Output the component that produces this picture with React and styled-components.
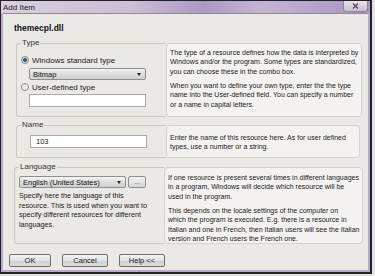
import React from 'react'
import styled, { createGlobalStyle } from 'styled-components'

const Global = createGlobalStyle`
  html, body { margin: 0; padding: 0; background: #e4e4e4; }
  body { font-family: "Liberation Sans", Arial, sans-serif; }
`

const Window = styled.div`
  width: 372px;
  height: 274px;
  box-sizing: border-box;
  border: 1px solid #222;
  border-right-width: 2px;
  border-bottom-width: 2px;
  background: #b8aac8;
  display: flex;
  flex-direction: column;
  overflow: hidden;
`

const TitleBar = styled.div`
  height: 12px;
  flex: none;
  display: flex;
  align-items: center;
  justify-content: space-between;
  padding-left: 2px;
  background: linear-gradient(90deg, #d6d0dc 0%, #c9bfd6 35%, #ab98c6 55%, #c2b5d4 70%, #a993c8 100%);
  font-size: 8px;
  color: #1e1a24;
`

const CloseBtn = styled.div`
  width: 23px;
  height: 10px;
  margin-right: 2px;
  align-self: flex-start;
  border: 1px solid #8d8597;
  border-top: none;
  border-radius: 0 0 3px 3px;
  background: linear-gradient(#e6e2ea, #c8c0d2);
  display: flex;
  align-items: center;
  justify-content: center;
`

const Body = styled.div`
  flex: 1;
  margin: 0 2px 2px 2px;
  background: #ebe9e6;
  border-top: 1px solid #8e8a92;
  padding: 9px 8px 0 7px;
  display: flex;
  flex-direction: column;
`

const FileName = styled.div`
  font-weight: bold;
  font-size: 8.5px;
  color: #111;
  margin-left: 4px;
  height: 10px;
  line-height: 10px;
`

const Group = styled.div`
  display: grid;
  grid-template-columns: ${p => p.$left}px 1fr;
  min-height: ${p => p.$h}px;
  margin-top: ${p => p.$mt}px;
  margin-left: ${p => p.$ml || 6}px;
`

const Frame = styled.div`
  position: relative;
  border: 1px solid #cbc8c3;
  border-right: none;
  border-radius: 3px 0 0 3px;
  padding: ${p => p.$pad};
  display: flex;
  flex-direction: column;
`

const Legend = styled.span`
  position: absolute;
  top: -6px;
  left: 4px;
  padding: 0 1px;
  background: #ebe9e6;
  font-size: 8px;
  color: #333;
  line-height: 10px;
`

const Info = styled.div`
  background: #f3f2f0;
  border: 1px solid #d5d2cd;
  border-radius: 4px;
  padding: ${p => p.$pad || '3px 3px'};
  font-size: 7px;
  line-height: 9.4px;
  color: #1a1a1a;
  p { margin: 0 0 4.5px 0; white-space: nowrap; }
  p:last-child { margin-bottom: 0; }
`

const RadioRow = styled.label`
  display: flex;
  align-items: center;
  gap: 3px;
  font-size: 8px;
  color: #222;
  height: 10px;
  margin-left: 4px;
  margin-top: ${p => p.$mt || 0}px;
`

const Radio = styled.span`
  width: 8px;
  height: 8px;
  box-sizing: border-box;
  border-radius: 50%;
  border: 1px solid #8d8d8d;
  background: radial-gradient(circle, ${p => (p.$on ? '#445a6e 0 1.8px, #c9d1d8 2.2px' : '#e9e9e9 0')}, #f6f6f6 100%);
`

const Select = styled.div`
  width: ${p => p.$w}px;
  height: 12px;
  box-sizing: border-box;
  margin-left: ${p => p.$ml || 0}px;
  margin-top: ${p => p.$mt || 0}px;
  border: 1px solid #8f8f8f;
  border-radius: 2px;
  background: linear-gradient(#f4f4f4, #dcdcdc 55%, #cfcfcf);
  display: flex;
  align-items: center;
  justify-content: space-between;
  padding: 0 4px 0 3px;
  font-size: 7.5px;
  color: #111;
  &::after {
    content: '';
    border-left: 2.5px solid transparent;
    border-right: 2.5px solid transparent;
    border-top: 3px solid #222;
  }
`

const TextBox = styled.div`
  width: ${p => p.$w}px;
  height: 13px;
  box-sizing: border-box;
  margin-left: ${p => p.$ml || 0}px;
  margin-top: ${p => p.$mt || 0}px;
  border: 1px solid #a9a9a9;
  background: #fff;
  font-size: 7.5px;
  color: #222;
  padding: 0 5px;
  line-height: 11px;
`

const LangRow = styled.div`
  display: flex;
  gap: 2px;
  align-items: center;
`

const SmallBtn = styled.div`
  width: 18px;
  height: 12px;
  box-sizing: border-box;
  border: 1px solid #909090;
  border-radius: 2px;
  background: linear-gradient(#f2f2f2, #d6d6d6);
  font-size: 7px;
  color: #666;
  text-align: center;
  line-height: 9px;
`

const Help = styled.div`
  font-size: 7.2px;
  line-height: 9.5px;
  color: #1a1a1a;
  margin-top: 3px;
`

const Buttons = styled.div`
  display: flex;
  gap: 11px;
  margin-top: 10px;
  margin-left: -1px;
`

const Button = styled.div`
  width: ${p => p.$w}px;
  height: 13px;
  box-sizing: border-box;
  border: 1px solid #6f6f6f;
  border-radius: 2px;
  background: linear-gradient(#f3f3f3, #e2e2e2 50%, #cfcfcf 51%, #dcdcdc);
  font-size: 7.5px;
  color: #222;
  display: flex;
  align-items: center;
  justify-content: center;
`

export default function App() {
  return (
    <>
      <Global />
      <Window>
        <TitleBar>
          <span>Add Item</span>
          <CloseBtn>
            <svg width="7" height="6" viewBox="0 0 7 6">
              <path d="M1 0.5 L6 5.5 M6 0.5 L1 5.5" stroke="#4b4553" strokeWidth="1.2" />
            </svg>
          </CloseBtn>
        </TitleBar>
        <Body>
          <FileName>themecpl.dll</FileName>

          <Group $left={150} $h={74} $mt={10}>
            <Frame $pad="11px 0 0 0">
              <Legend>Type</Legend>
              <RadioRow>
                <Radio $on />
                Windows standard type
              </RadioRow>
              <Select $w={117} $ml={12} $mt={3}>Bitmap</Select>
              <RadioRow $mt={2}>
                <Radio />
                User-defined type
              </RadioRow>
              <TextBox $w={117} $ml={12} $mt={2} />
            </Frame>
            <Info $pad="4px 3px">
              <p>The type of a resource defines how the data is interpreted by<br />Windows and/or the program. Some types are standardized,<br />you can choose these in the combo box.</p>
              <p>When you want to define your own type, enter the the type<br />name into the User-defined field. You can specify a number<br />or a name in capital letters.</p>
            </Info>
          </Group>

          <Group $left={150} $h={33} $mt={8}>
            <Frame $pad="9px 0 0 0">
              <Legend>Name</Legend>
              <TextBox $w={117} $ml={13}>103</TextBox>
            </Frame>
            <Info $pad="7px 3px 0">
              <p>Enter the name of this resource here. As for user defined<br />types, use a number or a string.</p>
            </Info>
          </Group>

          <Group $left={150} $h={75} $mt={9} $ml={4}>
            <Frame $pad="8px 0 0 4px">
              <Legend>Language</Legend>
              <LangRow>
                <Select $w={107}>English (United States)</Select>
                <SmallBtn>...</SmallBtn>
              </LangRow>
              <Help>
                Specify here the language of this<br />
                resource. This is used when you want to<br />
                specify different resources for different<br />
                languages.
              </Help>
            </Frame>
            <Info $pad="5px 3px 0">
              <p>If one resource is present several times in different languages<br />in a program, Windows will decide which resource will be<br />used in the program.</p>
              <p>This depends on the locale settings of the computer on<br />which the program is executed. E.g. there is a resource in<br />Italian and one in French, then Italian users will see the Italian<br />version and French users the French one.</p>
            </Info>
          </Group>

          <Buttons>
            <Button $w={42}>OK</Button>
            <Button $w={46}>Cancel</Button>
            <Button $w={46}>Help &lt;&lt;</Button>
          </Buttons>
        </Body>
      </Window>
    </>
  )
}
